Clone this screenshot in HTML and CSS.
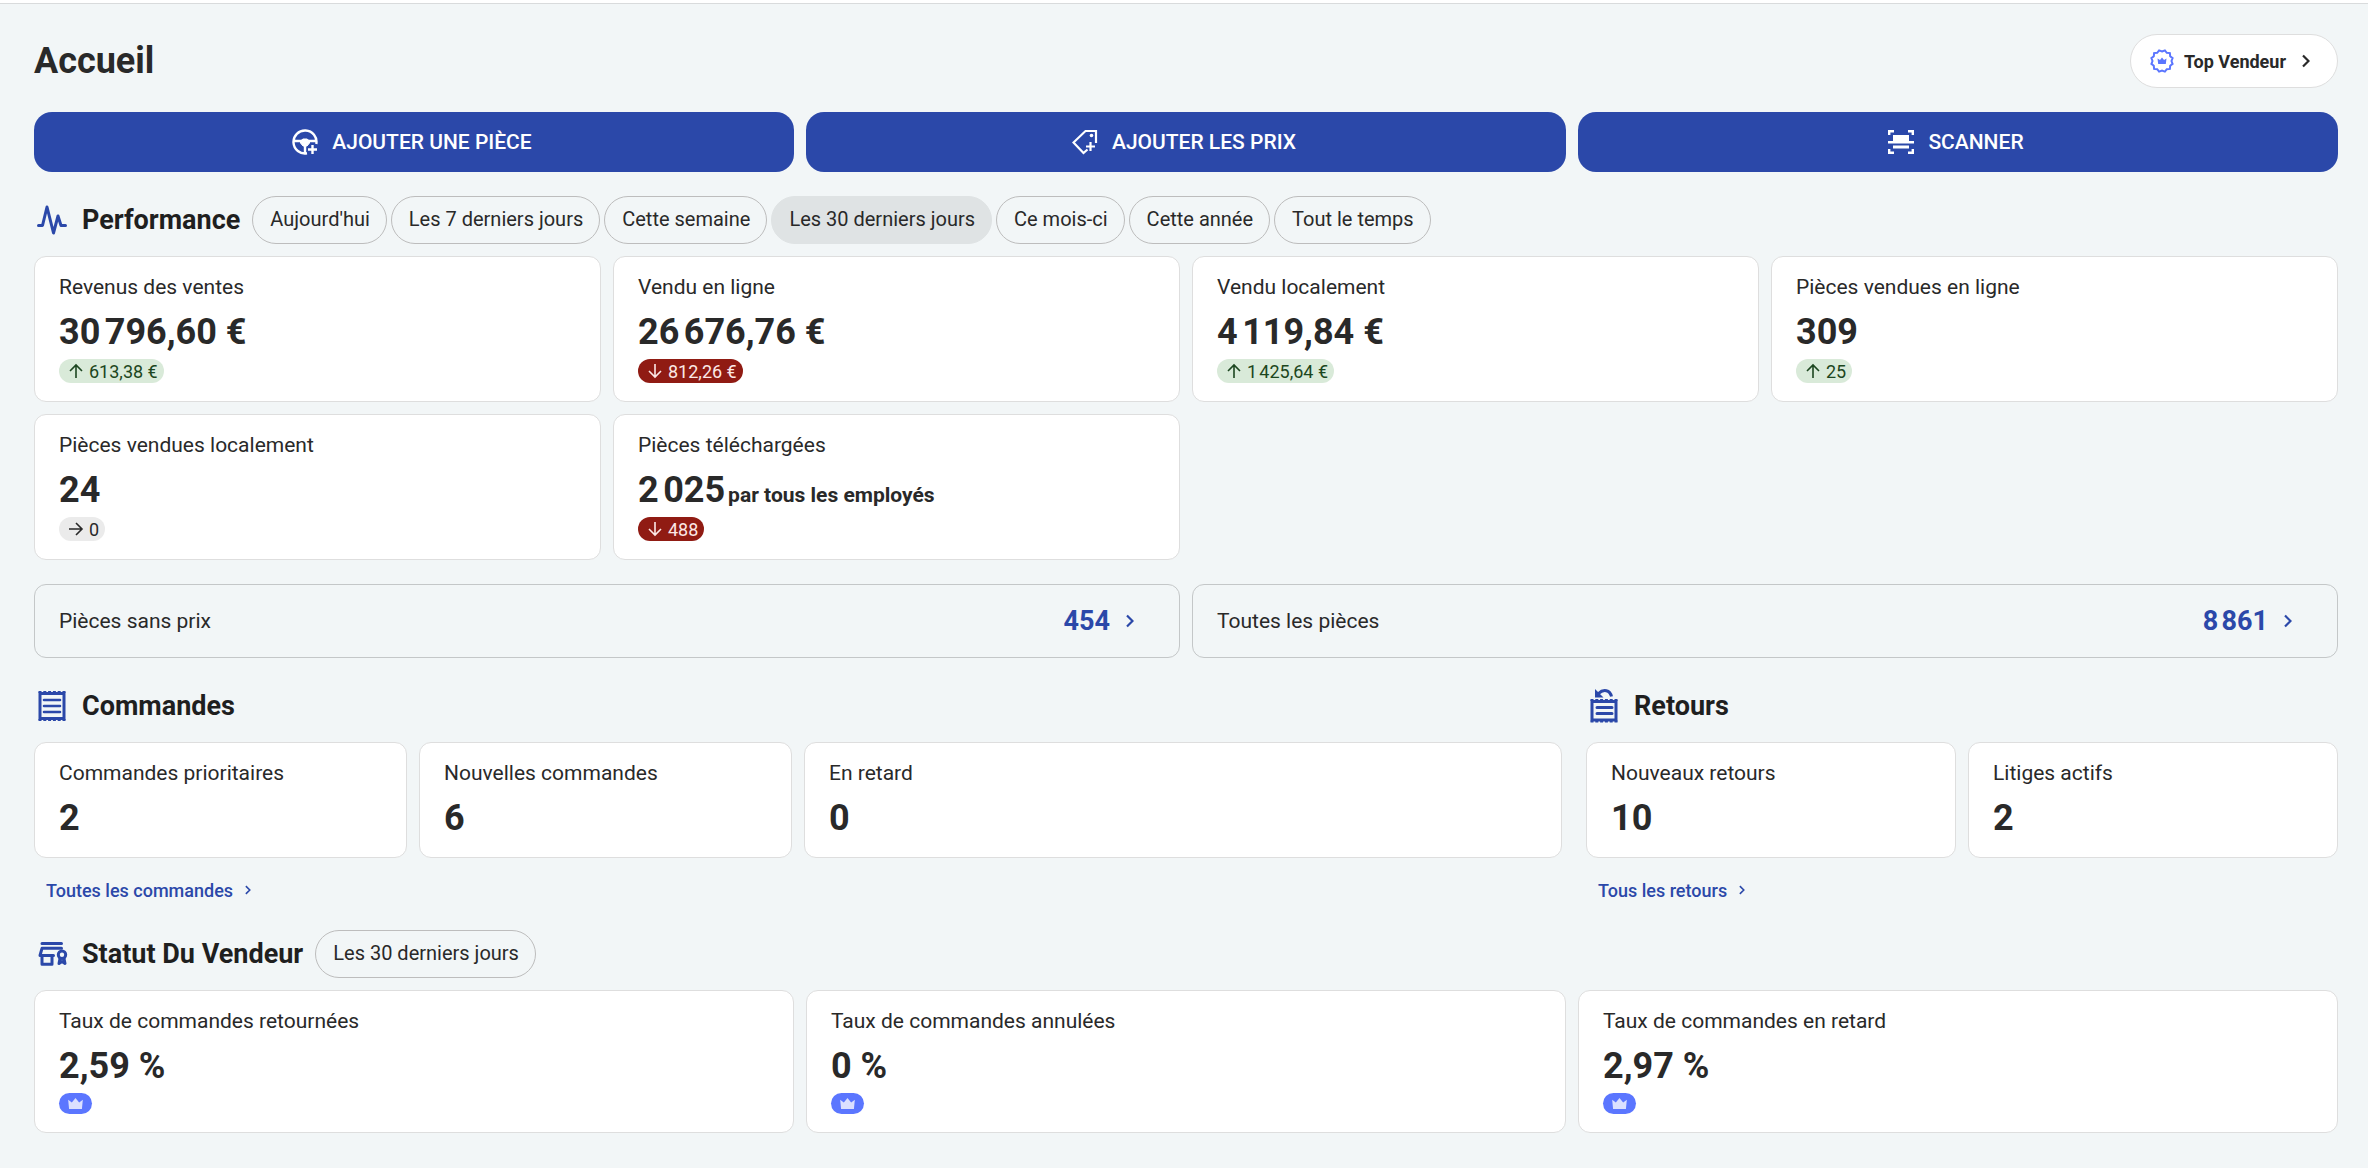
FILE: index.html
```html
<!DOCTYPE html>
<html lang="fr">
<head>
<meta charset="utf-8">
<meta name="viewport" content="width=device-width, initial-scale=1">
<title>Accueil</title>
<link rel="stylesheet" href="styles.css">
</head>
<body>
<svg class="sprite" aria-hidden="true">
  <symbol id="chevron" viewBox="0 0 8 14"><path d="M1 1.500l5.500 5.500-5.500 5.500" fill="none" stroke="currentColor" stroke-width="2.200"/></symbol>
  <symbol id="up" viewBox="0 0 16 16"><path d="M8 15V2M2 8l6-6 6 6" fill="none" stroke="currentColor" stroke-width="1.600"/></symbol>
  <symbol id="down" viewBox="0 0 16 16"><path d="M8 1v13M2 8l6 6 6-6" fill="none" stroke="currentColor" stroke-width="1.600"/></symbol>
  <symbol id="right" viewBox="0 0 16 16"><path d="M1 8h13M8 2l6 6-6 6" fill="none" stroke="currentColor" stroke-width="1.600"/></symbol>
  <symbol id="crown" viewBox="0 0 16 12"><path d="M0 2l4 3 4-5 4 5 4-3-1 10H1z" fill="currentColor"/></symbol>
</svg>
<main class="page">
  <header class="page-header">
    <h1 class="page-title">Accueil</h1>
    <button class="seller" type="button">
      <svg class="icon-24" viewBox="0 0 24 24" aria-hidden="true"><path d="M12 2.500l2.900-1.100 1.900 2.400 3.100.3.300 3.100 2.400 1.900L21.500 12l1.100 2.900-2.400 1.900-.3 3.100-3.100.3-1.900 2.400-2.900-1.100-2.900 1.100-1.900-2.400-3.100-.3-.3-3.100-2.400-1.900L2.500 12 1.400 9.100l2.400-1.900.3-3.100 3.100-.3 1.900-2.400z" fill="none" stroke="currentColor" stroke-width="2"/><path d="M7.500 9.500l2.500 1.500 2-2.500 2 2.500 2.500-1.500-.7 5.500H8.200z" fill="currentColor"/></svg>
      <span>Top Vendeur</span>
      <svg class="chevron" aria-hidden="true"><use href="#chevron"/></svg>
    </button>
  </header>

  <div class="actions">
    <button class="action" type="button">
      <svg class="icon-26" viewBox="0 0 26 26" fill="none" stroke="currentColor" stroke-width="2.400" aria-hidden="true"><path d="M24.300 15A11.500 11.500 0 1 0 15 24.300M2 12h22M13 14v11M20.500 16v9M16 20.500h9"/><path d="M8.500 12l2.500-2h4l2.500 2v2L15 17h-4l-2.500-3z" fill="currentColor" stroke-width="1"/></svg>
      <span>AJOUTER UNE PIÈCE</span>
    </button>
    <button class="action" type="button">
      <svg class="icon-26" viewBox="0 0 26 26" fill="none" stroke="currentColor" stroke-width="2.200" aria-hidden="true"><path d="M24 14V2H13.500L1.500 13.500l10 10.500 4-3.500M18.500 13v9M14 17.500h9"/><circle cx="19.500" cy="6.500" r="1.800" fill="currentColor" stroke="none"/></svg>
      <span>AJOUTER LES PRIX</span>
    </button>
    <button class="action" type="button">
      <svg class="icon-26" viewBox="0 0 26 26" fill="none" stroke="currentColor" stroke-width="2.400" aria-hidden="true"><path d="M1.200 6V2.200H6M20 2.200h4.800V6M1.200 20v3.800H6M20 23.800h4.800V20M0 13.200h26"/><path d="M5 6h16v6H5zM5 16.500h16v3H5z" fill="currentColor" stroke="none"/></svg>
      <span>SCANNER</span>
    </button>
  </div>

  <section class="section">
    <div class="section-head">
      <svg class="section-icon" viewBox="0 0 36 36" aria-hidden="true"><path d="M4.500 23.500h4L13 5l6.500 26 4.500-17 3 9.500h4.500" fill="none" stroke="currentColor" stroke-width="3" stroke-linecap="round" stroke-linejoin="round"/></svg>
      <h2 class="section-title">Performance</h2>
      <div class="pills">
        <button class="pill" type="button">Aujourd'hui</button>
        <button class="pill" type="button">Les 7 derniers jours</button>
        <button class="pill" type="button">Cette semaine</button>
        <button class="pill pill-active" type="button" aria-pressed="true">Les 30 derniers jours</button>
        <button class="pill" type="button">Ce mois-ci</button>
        <button class="pill" type="button">Cette année</button>
        <button class="pill" type="button">Tout le temps</button>
      </div>
    </div>
    <div class="grid grid-4">
      <article class="card"><h3 class="label">Revenus des ventes</h3><p class="value">30&#8239;796,60&nbsp;€</p><span class="chip chip-up"><svg aria-hidden="true"><use href="#up"/></svg>613,38&nbsp;€</span></article>
      <article class="card"><h3 class="label">Vendu en ligne</h3><p class="value">26&#8239;676,76&nbsp;€</p><span class="chip chip-down"><svg aria-hidden="true"><use href="#down"/></svg>812,26&nbsp;€</span></article>
      <article class="card"><h3 class="label">Vendu localement</h3><p class="value">4&#8239;119,84&nbsp;€</p><span class="chip chip-up"><svg aria-hidden="true"><use href="#up"/></svg>1&#8239;425,64&nbsp;€</span></article>
      <article class="card"><h3 class="label">Pièces vendues en ligne</h3><p class="value">309</p><span class="chip chip-up"><svg aria-hidden="true"><use href="#up"/></svg>25</span></article>
      <article class="card"><h3 class="label">Pièces vendues localement</h3><p class="value">24</p><span class="chip"><svg aria-hidden="true"><use href="#right"/></svg>0</span></article>
      <article class="card"><h3 class="label">Pièces téléchargées</h3><p class="value">2&#8239;025<small class="note">par tous les employés</small></p><span class="chip chip-down"><svg aria-hidden="true"><use href="#down"/></svg>488</span></article>
    </div>
  </section>

  <div class="grid grid-2">
    <a class="total" href="#"><span>Pièces sans prix</span><span class="total-value">454<svg class="chevron" aria-hidden="true"><use href="#chevron"/></svg></span></a>
    <a class="total" href="#"><span>Toutes les pièces</span><span class="total-value">8&#8239;861<svg class="chevron" aria-hidden="true"><use href="#chevron"/></svg></span></a>
  </div>

  <div class="columns">
    <section class="section orders">
      <div class="section-head">
        <svg class="section-icon" viewBox="0 0 36 36" aria-hidden="true"><path d="M6 5.500h24v25H6z" fill="none" stroke="currentColor" stroke-width="3"/><path d="M4.500 4h27M4.500 32h27" stroke="currentColor" stroke-width="2" stroke-dasharray="3 1.800"/><path d="M10 12h16M10 18h16M10 24h16" stroke="currentColor" stroke-width="2.600" stroke-linecap="round"/></svg>
        <h2 class="section-title">Commandes</h2>
      </div>
      <div class="grid grid-4">
        <article class="card"><h3 class="label">Commandes prioritaires</h3><p class="value">2</p></article>
        <article class="card"><h3 class="label">Nouvelles commandes</h3><p class="value">6</p></article>
        <article class="card span-2"><h3 class="label">En retard</h3><p class="value">0</p></article>
      </div>
      <a class="more" href="#">Toutes les commandes<svg aria-hidden="true"><use href="#chevron"/></svg></a>
    </section>
    <section class="section returns">
      <div class="section-head">
        <svg class="section-icon" viewBox="0 0 36 36" aria-hidden="true"><path d="M6 13.500h24v18.500H6z" fill="none" stroke="currentColor" stroke-width="3"/><path d="M4.500 12h27M4.500 33.500h27" stroke="currentColor" stroke-width="2" stroke-dasharray="3 1.800"/><path d="M11 19.500h15M11 25.500h15" stroke="currentColor" stroke-width="3" stroke-linecap="round"/><path d="M12.500 5.500c5-5 11.500-3.500 13 3" fill="none" stroke="currentColor" stroke-width="3"/><path d="M9 1v8.500h8.500z" fill="currentColor"/></svg>
        <h2 class="section-title">Retours</h2>
      </div>
      <div class="grid grid-2">
        <article class="card"><h3 class="label">Nouveaux retours</h3><p class="value">10</p></article>
        <article class="card"><h3 class="label">Litiges actifs</h3><p class="value">2</p></article>
      </div>
      <a class="more" href="#">Tous les retours<svg aria-hidden="true"><use href="#chevron"/></svg></a>
    </section>
  </div>

  <section class="section">
    <div class="section-head">
      <svg class="section-icon" viewBox="0 0 36 36" fill="none" stroke="currentColor" stroke-width="3" stroke-linecap="round" stroke-linejoin="round" aria-hidden="true"><path d="M8 7.500h19.500M27.500 12.300H8L6 19.500h13.500M8 19.500v8.700h10v-8.700"/><circle cx="28" cy="18.700" r="3.700"/><path d="M26 22.500L25 27.500l3-2 3 2-1-5"/></svg>
      <h2 class="section-title">Statut Du Vendeur</h2>
      <div class="pills"><button class="pill" type="button">Les 30 derniers jours</button></div>
    </div>
    <div class="grid grid-3">
      <article class="card"><h3 class="label">Taux de commandes retournées</h3><p class="value">2,59&nbsp;%</p><span class="rank"><svg aria-hidden="true"><use href="#crown"/></svg></span></article>
      <article class="card"><h3 class="label">Taux de commandes annulées</h3><p class="value">0&nbsp;%</p><span class="rank"><svg aria-hidden="true"><use href="#crown"/></svg></span></article>
      <article class="card"><h3 class="label">Taux de commandes en retard</h3><p class="value">2,97&nbsp;%</p><span class="rank"><svg aria-hidden="true"><use href="#crown"/></svg></span></article>
    </div>
  </section>
</main>
</body>
</html>
```
FILE: styles.css
```css
:root {
  --blue: #2b48a9;
  --violet: #5b76ff;
  --ink: #292929;
  --line: #dedede;
}

* { box-sizing: border-box; }

body {
  margin: 0;
  background: #f2f6f7;
  color: var(--ink);
  font-family: Roboto, "Liberation Sans", sans-serif;
  font-size: 20px;
  border-top: 3px solid #fff;
}

button, a { font: inherit; color: inherit; text-decoration: none; cursor: pointer; }
h1, h2, h3, p { margin: 0; }
svg { flex: none; }
.sprite { display: none; }

.page {
  display: flex;
  flex-direction: column;
  gap: 24px;
  padding: 30px 30px 34px 34px;
  border-top: 1px solid #d9dbdc;
}

.page-header { display: flex; align-items: center; justify-content: space-between; }
.page-title { font-size: 36px; line-height: 42px; font-weight: 700; }

.seller {
  display: flex;
  align-items: center;
  gap: 10px;
  height: 54px;
  padding: 0 27px 0 19px;
  border: 1px solid var(--line);
  border-radius: 27px;
  background: #fff;
  font-size: 18px;
  font-weight: 700;
}
.seller .icon-24 { color: var(--violet); }
.seller .chevron { margin-left: 6px; }

.icon-24 { width: 24px; height: 24px; }
.icon-26 { width: 26px; height: 26px; }
.chevron { width: 8px; height: 14px; }

.actions { display: grid; grid-template-columns: repeat(3, 1fr); gap: 12px; }
.action {
  display: flex;
  align-items: center;
  justify-content: center;
  gap: 14px;
  height: 60px;
  padding: 0 10px 0 6px;
  border: 0;
  border-radius: 18px;
  background: var(--blue);
  color: #fff;
  font-size: 21px;
  font-weight: 500;
}

.section-head { display: flex; align-items: center; min-height: 48px; margin-bottom: 12px; }
.section-icon { width: 36px; height: 36px; margin-right: 12px; color: var(--blue); }
.section-title { font-size: 27px; line-height: 32px; font-weight: 700; color: #1f1f1f; }
.pills { display: flex; gap: 4px; margin-left: 12px; }
.pill {
  height: 48px;
  padding: 0 16px 2px 17px;
  border: 1px solid #bdbdbd;
  border-radius: 24px;
  background: transparent;
}
.pill-active { border-color: #dfe3e4; background: #dfe3e4; }

.grid { display: grid; gap: 12px; }
.grid-2 { grid-template-columns: repeat(2, 1fr); }
.grid-3 { grid-template-columns: repeat(3, 1fr); }
.grid-4 { grid-template-columns: repeat(4, 1fr); }
.span-2 { grid-column: span 2; }

.card {
  display: flex;
  flex-direction: column;
  align-items: flex-start;
  padding: 16px 24px 18px;
  border: 1px solid var(--line);
  border-radius: 12px;
  background: #fff;
}
.label { font-size: 21px; line-height: 28px; font-weight: 400; }
.value { margin-top: 10px; font-size: 36px; line-height: 42px; font-weight: 700; }
.note { margin-left: 3px; font-size: 21px; line-height: 24px; }

.chip {
  display: flex;
  align-items: center;
  gap: 5px;
  height: 24px;
  margin-top: 6px;
  padding: 0 6px 0 9px;
  border-radius: 12px;
  background: #ebebeb;
  font-size: 18px;
}
.chip svg { width: 16px; height: 16px; }
.chip-up { background: #d9ead9; color: #1c4620; }
.chip-down { background: #901b13; color: #fce8e6; }

.rank {
  display: flex;
  align-items: center;
  justify-content: center;
  width: 33px;
  height: 21px;
  margin-top: 6px;
  border-radius: 11px;
  background: var(--violet);
  color: #dbe0ff;
}
.rank svg { width: 15px; height: 11px; }

.total {
  display: flex;
  align-items: center;
  justify-content: space-between;
  height: 74px;
  padding: 0 45px 0 24px;
  border: 1px solid #c4c7c8;
  border-radius: 12px;
  font-size: 21px;
}
.total-value { display: flex; align-items: center; gap: 16px; color: var(--blue); font-size: 27px; font-weight: 700; }

.columns { display: grid; grid-template-columns: repeat(12, 1fr); gap: 24px; }
.orders { grid-column: span 8; }
.returns { grid-column: span 4; }
.more {
  display: flex;
  align-items: center;
  gap: 12px;
  width: fit-content;
  height: 32px;
  margin-top: 16px;
  padding: 0 12px;
  color: var(--blue);
  font-size: 18px;
  font-weight: 500;
}
.more svg { width: 6px; height: 10px; }
```
